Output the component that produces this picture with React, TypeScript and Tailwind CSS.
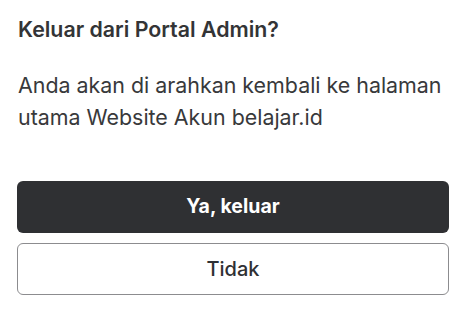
import React from "react";

const App = () => {
  return (
    <div
      className="bg-white w-[466px] h-[316px] px-[17px] pt-[15px] text-[#333436]"
      style={{ fontFamily: "Inter, 'Noto Sans', sans-serif" }}
    >
      <h1 className="text-[21.33px] leading-7 font-semibold pl-px">
        Keluar dari Portal Admin?
      </h1>
      <p className="mt-[26px] text-[21.4px] leading-8 pl-px text-[#38393b]">
        Anda akan di arahkan kembali ke halaman utama Website Akun belajar.id
      </p>
      <div className="mt-[48px] flex flex-col gap-[10px]">
        <button className="h-[52px] w-full rounded-md bg-[#2f3033] text-white text-[19.5px] font-bold">
          Ya, keluar
        </button>
        <button className="h-[52px] w-full rounded-md border border-[#8c8c8f] bg-white text-[#2f3033] text-[20px] font-medium">
          Tidak
        </button>
      </div>
    </div>
  );
};

export default App;
